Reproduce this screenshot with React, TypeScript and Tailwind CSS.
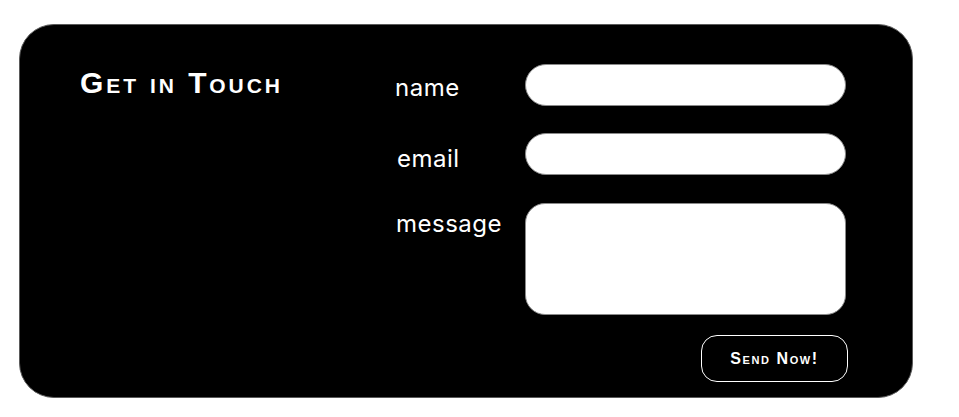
import React from "react";

export default function App() {
  return (
    <div className="min-h-[417px] w-[959px] bg-white pt-[24px] pl-[19px]">
      <div className="flex h-[374px] w-[894px] rounded-[35px] border border-[#5a5a5a] bg-black pl-[60px] pt-[39px]">
        <div className="w-[315px]">
          <h2
            className="mt-[4px] text-[30px] font-bold leading-none text-white [font-variant:small-caps] tracking-[2.9px]"
            style={{ fontFamily: '"Liberation Sans", Arial, sans-serif' }}
          >
            Get in Touch
          </h2>
        </div>
        <form
          className="flex flex-col"
          style={{ fontFamily: 'Inter, "Noto Sans", sans-serif' }}
          onSubmit={(e) => e.preventDefault()}
        >
          <div className="flex">
            <label className="w-[130px] pt-[12px] text-[24px] leading-none tracking-[0.5px] text-white">name</label>
            <input className="h-[42px] w-[321px] rounded-full border border-[#8a8a8a] bg-white px-4 outline-none" />
          </div>
          <div className="mt-[27px] flex">
            <label className="w-[130px] pt-[14px] pl-[2px] text-[24px] leading-none tracking-[0.5px] text-white">email</label>
            <input className="h-[42px] w-[321px] rounded-full border border-[#8a8a8a] bg-white px-4 outline-none" />
          </div>
          <div className="mt-[28px] flex">
            <label className="w-[130px] pt-[9px] pl-[1px] text-[24px] leading-none tracking-[0.5px] text-white">message</label>
            <textarea className="h-[112px] w-[321px] resize-none rounded-[20px] border border-[#8a8a8a] bg-white px-4 py-2 outline-none" />
          </div>
          <div className="mt-[20px] flex justify-end">
            <button
              type="submit"
              className="mr-[-2px] h-[47px] w-[147px] rounded-[16px] border border-white bg-black text-[16px] font-bold leading-none text-white [font-variant:small-caps] tracking-[1.6px]"
              style={{ fontFamily: '"Liberation Sans", Arial, sans-serif' }}
            >
              Send Now!
            </button>
          </div>
        </form>
      </div>
    </div>
  );
}
